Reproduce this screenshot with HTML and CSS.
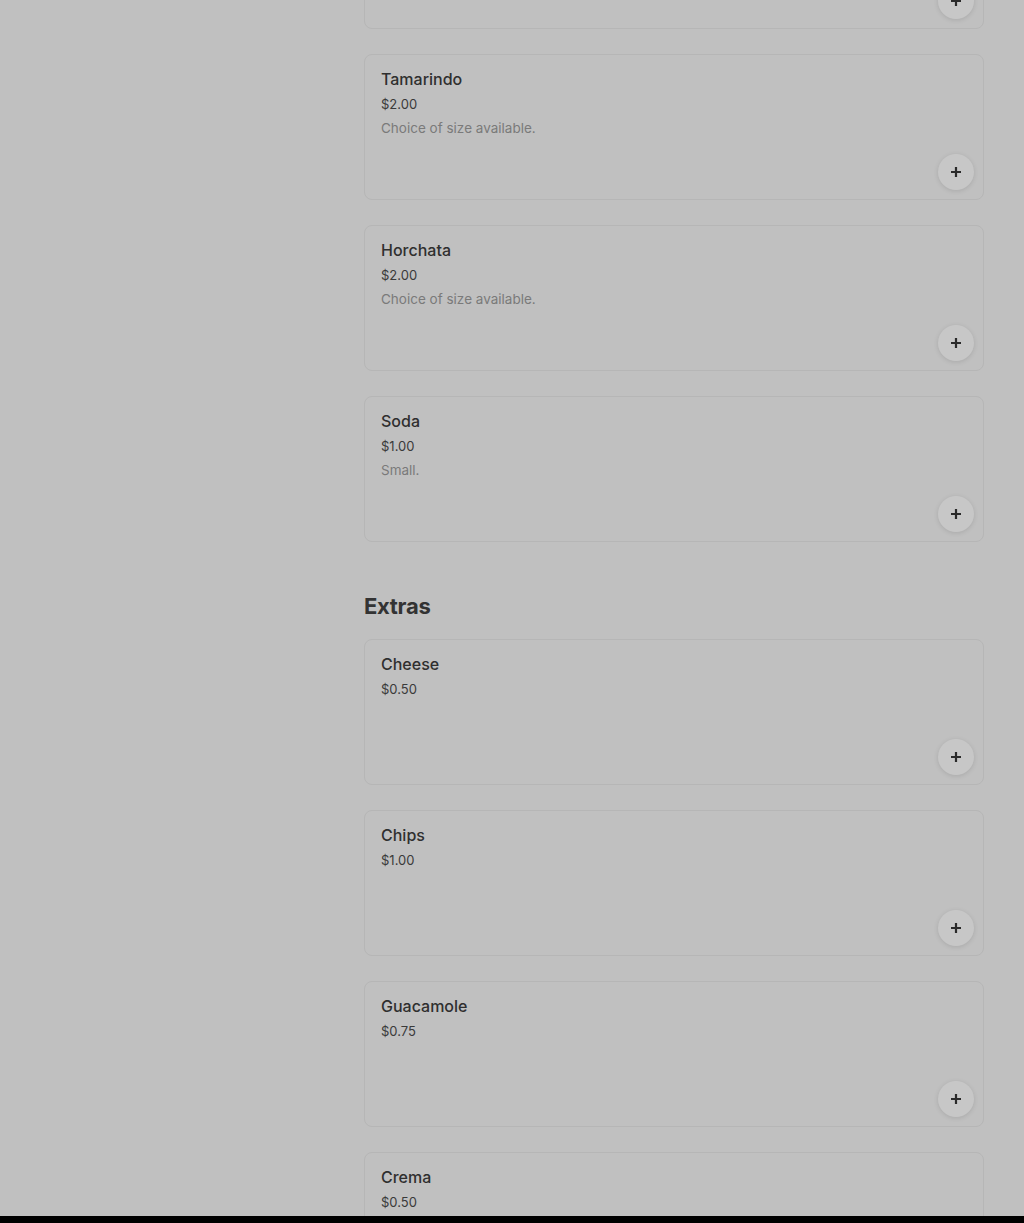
FILE: index.html
```html
<!DOCTYPE html>
<html>
<head>
  <meta charset="UTF-8">
  <title>Menu</title>
  <link rel="stylesheet" href="styles.css">
</head>
<body>
  <div class="page">
    <div class="sidebar"></div>

    <div class="menu">
      <!-- Drinks (scrolled past the first item) -->
      <div class="section section-scrolled">
        <div class="items">
          <div class="item">
            <button class="add"><svg viewBox="0 0 12 12" width="12" height="12"><path d="M6 1v10M1 6h10" stroke="#2a2a2a" stroke-width="2.2"/></svg></button>
          </div>
          <div class="item">
            <div class="item-name">Tamarindo</div>
            <div class="item-price">$2.00</div>
            <div class="item-desc">Choice of size available.</div>
            <button class="add"><svg viewBox="0 0 12 12" width="12" height="12"><path d="M6 1v10M1 6h10" stroke="#2a2a2a" stroke-width="2.2"/></svg></button>
          </div>
          <div class="item">
            <div class="item-name">Horchata</div>
            <div class="item-price">$2.00</div>
            <div class="item-desc">Choice of size available.</div>
            <button class="add"><svg viewBox="0 0 12 12" width="12" height="12"><path d="M6 1v10M1 6h10" stroke="#2a2a2a" stroke-width="2.2"/></svg></button>
          </div>
          <div class="item">
            <div class="item-name">Soda</div>
            <div class="item-price">$1.00</div>
            <div class="item-desc">Small.</div>
            <button class="add"><svg viewBox="0 0 12 12" width="12" height="12"><path d="M6 1v10M1 6h10" stroke="#2a2a2a" stroke-width="2.2"/></svg></button>
          </div>
        </div>
      </div>

      <!-- Extras -->
      <div class="section">
        <h2 class="section-title">Extras</h2>
        <div class="items">
          <div class="item">
            <div class="item-name">Cheese</div>
            <div class="item-price">$0.50</div>
            <button class="add"><svg viewBox="0 0 12 12" width="12" height="12"><path d="M6 1v10M1 6h10" stroke="#2a2a2a" stroke-width="2.2"/></svg></button>
          </div>
          <div class="item">
            <div class="item-name">Chips</div>
            <div class="item-price">$1.00</div>
            <button class="add"><svg viewBox="0 0 12 12" width="12" height="12"><path d="M6 1v10M1 6h10" stroke="#2a2a2a" stroke-width="2.2"/></svg></button>
          </div>
          <div class="item">
            <div class="item-name">Guacamole</div>
            <div class="item-price">$0.75</div>
            <button class="add"><svg viewBox="0 0 12 12" width="12" height="12"><path d="M6 1v10M1 6h10" stroke="#2a2a2a" stroke-width="2.2"/></svg></button>
          </div>
          <div class="item">
            <div class="item-name">Crema</div>
            <div class="item-price">$0.50</div>
            <button class="add"><svg viewBox="0 0 12 12" width="12" height="12"><path d="M6 1v10M1 6h10" stroke="#2a2a2a" stroke-width="2.2"/></svg></button>
          </div>
        </div>
      </div>
    </div>
  </div>

  <div class="bottom-bar"></div>
</body>
</html>
```

FILE: styles.css
```css
html, body { margin: 0; height: 100%; overflow: hidden; }
body { font-family: Inter, "Noto Sans", sans-serif; background: #c0c0c0; color: #2e2e2e; }

.page { display: flex; }
.sidebar { width: 364px; flex-shrink: 0; }
.menu { width: 620px; }

.section-scrolled { margin-top: -117px; }
.section { margin-bottom: 50px; }
.section-title { font-size: 22px; font-weight: 700; line-height: 28px; margin: 0 0 19px; color: #333; letter-spacing: -0.3px; }

.items { display: flex; flex-direction: column; gap: 25px; }
.item { height: 146px; box-sizing: border-box; border: 1px solid #b6b6b6; border-radius: 8px; padding: 14px 9px 9px 16px; display: flex; flex-direction: column; }
.item-name { font-size: 16px; line-height: 20px; font-weight: 500; color: #2f2f2f; }
.item-price { font-size: 13px; line-height: 20px; margin-top: 5px; color: #3a3a3a; }
.item-desc { font-size: 13.5px; line-height: 20px; margin-top: 4px; color: #7a7a7a; }

.add { margin-top: auto; align-self: flex-end; width: 36px; height: 36px; border-radius: 50%; border: none; background: #c7c7c7; box-shadow: 0 1px 5px rgba(0,0,0,0.12); display: flex; align-items: center; justify-content: center; padding: 0; cursor: pointer; }

.bottom-bar { position: fixed; left: 0; right: 0; bottom: 0; height: 7px; background: #000; }
```
